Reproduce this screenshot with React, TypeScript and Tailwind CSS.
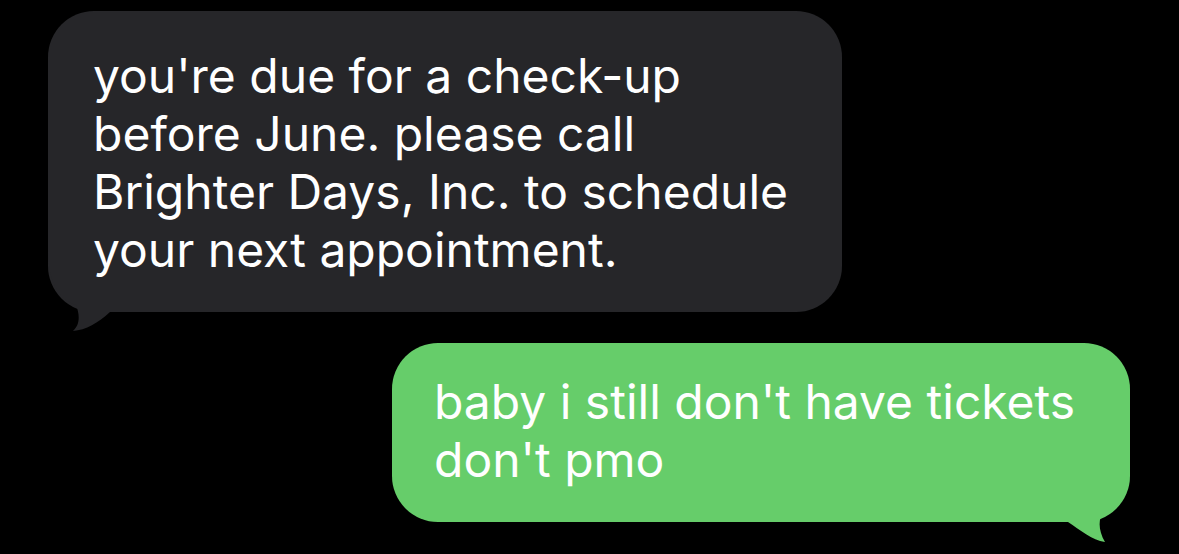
import React from "react";

export default function App() {
  return (
    <div className="w-[1179px] h-[554px] bg-black overflow-hidden flex flex-col" style={{ fontFamily: "Inter, 'Noto Sans', sans-serif" }}>
      <div className="relative ml-[48px] mt-[11px] w-[794px] h-[301px] rounded-[46px] bg-[#262629] pl-[45px] pt-[36px] text-white text-[48px] leading-[58px]">
        <svg className="absolute left-[-48px] top-[-11px] pointer-events-none" width="200" height="340" viewBox="0 0 200 340">
          <path d="M48 250 C48 283 60 300 76 305 C80 315 80 325 73 331 C86 330 98 323 110 312 L130 312 L130 250 Z" fill="#262629" />
        </svg>
        <div className="relative">
          <div className="whitespace-nowrap">you're due for a check-up</div>
          <div className="whitespace-nowrap">before June. please call</div>
          <div className="whitespace-nowrap">Brighter Days, Inc. to schedule</div>
          <div className="whitespace-nowrap">your next appointment.</div>
        </div>
      </div>
      <div className="relative ml-[392px] mt-[31px] w-[738px] h-[179px] rounded-[46px] bg-[#66cd6a] pl-[42px] pt-[30px] text-white text-[48px] leading-[58px]">
        <svg className="absolute left-[-392px] top-[-343px] pointer-events-none" width="1179" height="554" viewBox="0 0 1179 554">
          <path d="M1130 460 C1130 493 1118 507 1104 512 C1098 518 1098 530 1105 542 C1092 540 1080 530 1068 522 L1050 522 L1050 460 Z" fill="#66cd6a" />
        </svg>
        <div className="relative">
          <div className="whitespace-nowrap">baby i still don't have tickets</div>
          <div className="whitespace-nowrap">don't pmo</div>
        </div>
      </div>
    </div>
  );
}
